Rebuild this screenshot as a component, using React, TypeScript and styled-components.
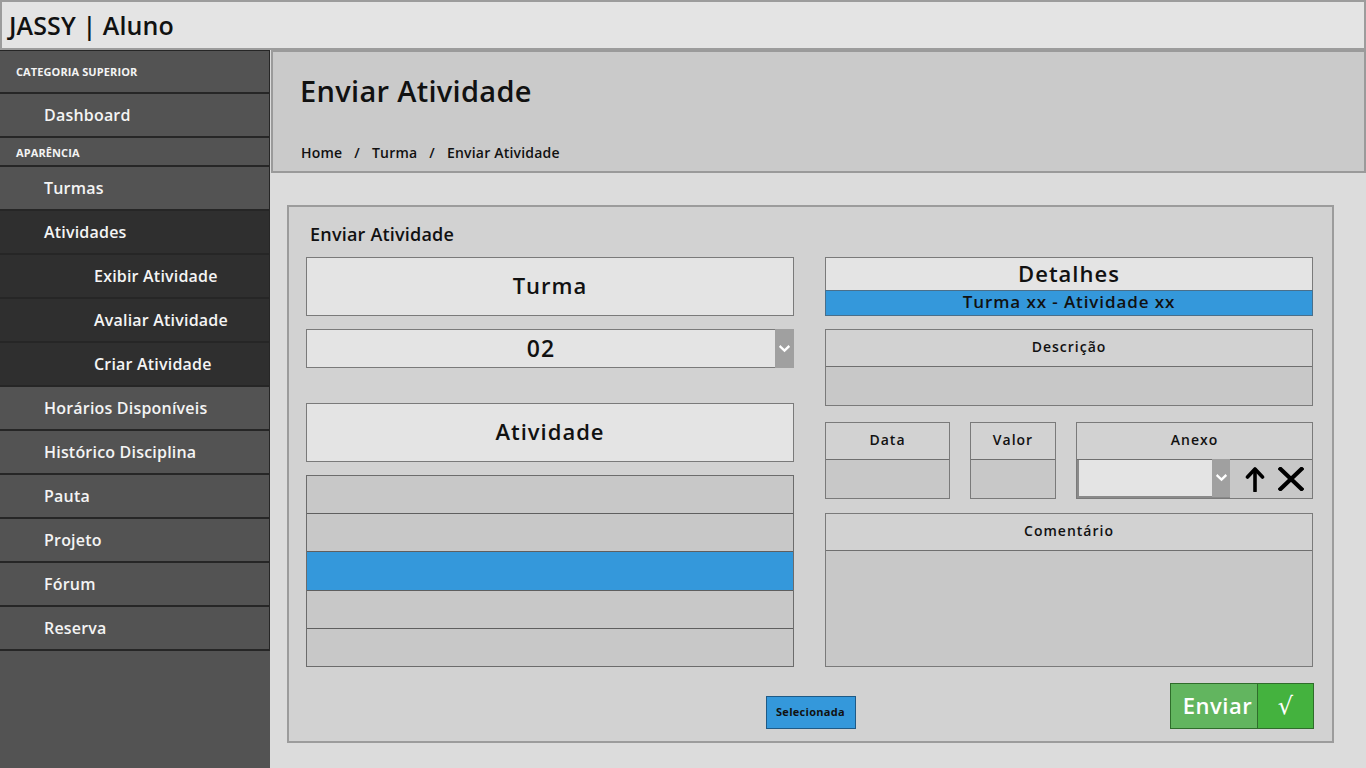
import React from 'react';
import styled, { createGlobalStyle } from 'styled-components';

const Global = createGlobalStyle`
  html, body { margin: 0; padding: 0; }
  body {
    font-family: "Open Sans", "Noto Sans", "DejaVu Sans", sans-serif;
    background: #dcdcdc;
    color: #111;
  }
  * { box-sizing: border-box; }
`;

const Page = styled.div`
  width: 1366px;
  height: 768px;
  display: flex;
  flex-direction: column;
  overflow: hidden;
`;

const TopBar = styled.header`
  height: 50px;
  flex: none;
  background: #e4e4e4;
  border: 2px solid #9c9c9c;
  display: flex;
  align-items: center;
  padding-left: 7px;
  padding-bottom: 1px;
  font-size: 25px;
  font-weight: 600;
  letter-spacing: 0.1px;
  color: #111;
`;

const Body = styled.div`
  flex: 1;
  display: flex;
  min-height: 0;
`;

const Sidebar = styled.nav`
  width: 270px;
  flex: none;
  background: #535353;
  display: flex;
  flex-direction: column;
  border-top: 1px solid #262626;
`;

const NavItem = styled.div<{ $level: number; $dark?: boolean; $header?: boolean }>`
  height: ${(p) => (p.$header ? (p.$level === 0 ? 43 : 29) : 44)}px;
  flex: none;
  background: ${(p) => (p.$dark ? '#2f2f2f' : '#535353')};
  border-bottom: 2px solid #262626;
  border-right: 1px solid #262626;
  display: flex;
  align-items: center;
  padding-left: ${(p) => (p.$header ? 16 : p.$level === 2 ? 94 : 44)}px;
  padding-top: ${(p) => (p.$header && p.$level === 1 ? 2 : 0)}px;
  color: #f4f4f4;
  font-size: ${(p) => (p.$header ? 11 : 16)}px;
  font-weight: ${(p) => (p.$header ? 700 : 600)};
  letter-spacing: ${(p) => (p.$header ? '0.1px' : '0.2px')};
`;

const Main = styled.main`
  flex: 1;
  display: flex;
  flex-direction: column;
  min-width: 0;
  background: #dcdcdc;
`;

const HeaderPanel = styled.section`
  height: 123px;
  flex: none;
  margin-left: 1px;
  background: #cacaca;
  border: 2px solid #9a9a9a;
  padding: 21px 27px 0;
  display: flex;
  flex-direction: column;
`;

const PageTitle = styled.h1`
  margin: 0;
  height: 36px;
  line-height: 36px;
  font-size: 29px;
  font-weight: 600;
  letter-spacing: 0.3px;
  color: #111;
`;

const Breadcrumb = styled.div`
  margin-top: 34px;
  height: 20px;
  line-height: 20px;
  font-size: 14px;
  font-weight: 600;
  letter-spacing: 0.2px;
  display: flex;
  gap: 12px;
  padding-left: 1px;
`;

const Card = styled.section`
  margin: 32px 32px 25px 17px;
  flex: 1;
  background: #d2d2d2;
  border: 2px solid #9c9c9c;
  padding: 15px 19px 12px 17px;
  display: flex;
  flex-direction: column;
`;

const CardTitle = styled.h2`
  margin: 0 0 11px 4px;
  height: 24px;
  line-height: 24px;
  font-size: 18px;
  font-weight: 600;
  letter-spacing: 0.2px;
`;

const Columns = styled.div`
  display: grid;
  grid-template-columns: 488px 488px;
  column-gap: 31px;
  height: 410px;
`;

const Column = styled.div`
  display: flex;
  flex-direction: column;
`;

const LabelBox = styled.div<{ $mt?: number }>`
  height: 59px;
  margin-top: ${(p) => p.$mt ?? 0}px;
  background: #e4e4e4;
  border: 1px solid #7a7a7a;
  display: flex;
  align-items: center;
  justify-content: center;
  padding-bottom: 4px;
  font-size: 22px;
  font-weight: 600;
  letter-spacing: 1px;
`;

const SelectBox = styled.div<{ $mt?: number }>`
  height: 39px;
  margin-top: ${(p) => p.$mt ?? 0}px;
  display: flex;
  background: #e4e4e4;
  border: 1px solid #7a7a7a;
  border-right: none;
`;

const SelectValue = styled.div`
  flex: 1;
  display: flex;
  align-items: center;
  justify-content: center;
  padding-bottom: 2px;
  font-size: 23px;
  font-weight: 600;
  letter-spacing: 1px;
`;

const SelectArrow = styled.div<{ $w: number }>`
  width: ${(p) => p.$w}px;
  flex: none;
  background: #a0a0a0;
  display: flex;
  align-items: center;
  justify-content: center;
  margin: -1px 0;
`;

const List = styled.div<{ $mt?: number }>`
  margin-top: ${(p) => p.$mt ?? 0}px;
  height: 192px;
  border: 1px solid #6c6c6c;
  display: flex;
  flex-direction: column;
`;

const ListRow = styled.div<{ $selected?: boolean }>`
  flex: 1;
  background: ${(p) => (p.$selected ? '#3498db' : '#c8c8c8')};
  & + & { border-top: 1px solid #5f5f5f; }
`;

const Details = styled.div`
  display: flex;
  flex-direction: column;
  height: 59px;
`;

const DetailsHead = styled.div`
  height: 33px;
  background: #e4e4e4;
  border: 1px solid #7a7a7a;
  border-bottom: none;
  display: flex;
  align-items: center;
  justify-content: center;
  padding-bottom: 3px;
  font-size: 22px;
  font-weight: 600;
  letter-spacing: 1px;
`;

const DetailsStrip = styled.div`
  height: 26px;
  background: #3498db;
  border: 1px solid #4a6f8a;
  display: flex;
  align-items: center;
  justify-content: center;
  padding-bottom: 3px;
  font-size: 17px;
  font-weight: 600;
  letter-spacing: 0.9px;
`;

const Field = styled.div<{ $mt?: number; $bodyH: number }>`
  margin-top: ${(p) => p.$mt ?? 0}px;
  border: 1px solid #7a7a7a;
  display: grid;
  grid-template-rows: 37px ${(p) => p.$bodyH}px;
  background: #c8c8c8;
`;

const FieldHead = styled.div`
  background: #d2d2d2;
  border-bottom: 1px solid #6f6f6f;
  display: flex;
  align-items: center;
  justify-content: center;
  padding-bottom: 3px;
  font-size: 14px;
  font-weight: 600;
  letter-spacing: 1px;
`;

const FieldBody = styled.div`
  background: #c8c8c8;
  display: flex;
`;

const FieldRow = styled.div`
  margin-top: 16px;
  display: grid;
  grid-template-columns: 125px 86px 1fr;
  column-gap: 20px;
`;

const AttachSelect = styled.div`
  width: 153px;
  display: flex;
  background: #e4e4e4;
  border: 2px solid #8a8a8a;
  border-top: none;
  border-right: none;
`;

const AttachTools = styled.div`
  flex: 1;
  display: flex;
  align-items: center;
  justify-content: space-around;
  padding: 0 2px 0 8px;
`;

const Footer = styled.div`
  margin-top: 16px;
  height: 46px;
  display: grid;
  grid-template-columns: 1fr auto 1fr;
  align-items: end;
`;

const SelectedButton = styled.button`
  grid-column: 2;
  width: 90px;
  height: 33px;
  background: #3498db;
  border: 1px solid #1f5a86;
  font-family: inherit;
  font-size: 11px;
  font-weight: 700;
  letter-spacing: 0.3px;
  color: #111;
  padding: 0 0 2px;
  margin-left: 2px;
`;

const SendButton = styled.button`
  grid-column: 3;
  justify-self: end;
  width: 144px;
  height: 46px;
  display: flex;
  padding: 0;
  border: 1px solid #2f6d2b;
  background: #62b55f;
  font-family: inherit;
  color: #fff;
  margin-right: -1px;
`;

const SendLabel = styled.span`
  width: 86px;
  height: 100%;
  display: flex;
  align-items: center;
  justify-content: center;
  font-size: 22px;
  font-weight: 600;
  letter-spacing: 0.5px;
  padding: 0 0 3px 7px;
`;

const SendCheck = styled.span`
  flex: 1;
  height: 100%;
  background: #44b23e;
  border-left: 1px solid #2f6d2b;
  display: flex;
  align-items: center;
  justify-content: center;
  font-size: 24px;
  font-weight: 400;
  font-family: "DejaVu Sans", sans-serif;
`;

const Chevron = () => (
  <svg width="11" height="8" viewBox="0 0 11 8">
    <path d="M1.5 1.8 L5.5 5.6 L9.5 1.8" fill="none" stroke="#fff" strokeWidth="2.4" strokeLinecap="square" />
  </svg>
);

const UpArrow = () => (
  <svg width="20" height="26" viewBox="0 0 20 26">
    <path d="M10 25 V4" stroke="#000" strokeWidth="3.6" strokeLinecap="round" />
    <path d="M2.5 11 L10 3 L17.5 11" fill="none" stroke="#000" strokeWidth="3.6" strokeLinecap="round" strokeLinejoin="round" />
  </svg>
);

const CloseX = () => (
  <svg width="26" height="24" viewBox="0 0 26 24">
    <path d="M2.5 2 L23.5 22 M23.5 2 L2.5 22" stroke="#000" strokeWidth="4.2" strokeLinecap="square" />
  </svg>
);

const nav: { label: string; level: number; header?: boolean; dark?: boolean }[] = [
  { label: 'CATEGORIA SUPERIOR', level: 0, header: true },
  { label: 'Dashboard', level: 1 },
  { label: 'APARÊNCIA', level: 1, header: true },
  { label: 'Turmas', level: 1 },
  { label: 'Atividades', level: 1, dark: true },
  { label: 'Exibir Atividade', level: 2, dark: true },
  { label: 'Avaliar Atividade', level: 2, dark: true },
  { label: 'Criar Atividade', level: 2, dark: true },
  { label: 'Horários Disponíveis', level: 1 },
  { label: 'Histórico Disciplina', level: 1 },
  { label: 'Pauta', level: 1 },
  { label: 'Projeto', level: 1 },
  { label: 'Fórum', level: 1 },
  { label: 'Reserva', level: 1 },
];

export default function App() {
  return (
    <>
      <Global />
      <Page>
        <TopBar>JASSY | Aluno</TopBar>
        <Body>
          <Sidebar>
            {nav.map((n) => (
              <NavItem key={n.label} $level={n.level} $header={n.header} $dark={n.dark}>
                {n.label}
              </NavItem>
            ))}
          </Sidebar>
          <Main>
            <HeaderPanel>
              <PageTitle>Enviar Atividade</PageTitle>
              <Breadcrumb>
                <span>Home</span>
                <span>/</span>
                <span>Turma</span>
                <span>/</span>
                <span>Enviar Atividade</span>
              </Breadcrumb>
            </HeaderPanel>
            <Card>
              <CardTitle>Enviar Atividade</CardTitle>
              <Columns>
                <Column>
                  <LabelBox>Turma</LabelBox>
                  <SelectBox $mt={13}>
                    <SelectValue>02</SelectValue>
                    <SelectArrow $w={19}>
                      <Chevron />
                    </SelectArrow>
                  </SelectBox>
                  <LabelBox $mt={35}>Atividade</LabelBox>
                  <List $mt={13}>
                    <ListRow />
                    <ListRow />
                    <ListRow $selected />
                    <ListRow />
                    <ListRow />
                  </List>
                </Column>
                <Column>
                  <Details>
                    <DetailsHead>Detalhes</DetailsHead>
                    <DetailsStrip>Turma xx - Atividade xx</DetailsStrip>
                  </Details>
                  <Field $mt={13} $bodyH={38}>
                    <FieldHead>Descrição</FieldHead>
                    <FieldBody />
                  </Field>
                  <FieldRow>
                    <Field $bodyH={38}>
                      <FieldHead>Data</FieldHead>
                      <FieldBody />
                    </Field>
                    <Field $bodyH={38}>
                      <FieldHead>Valor</FieldHead>
                      <FieldBody />
                    </Field>
                    <Field $bodyH={38}>
                      <FieldHead>Anexo</FieldHead>
                      <FieldBody>
                        <AttachSelect>
                          <SelectValue />
                          <SelectArrow $w={18}>
                            <Chevron />
                          </SelectArrow>
                        </AttachSelect>
                        <AttachTools>
                          <UpArrow />
                          <CloseX />
                        </AttachTools>
                      </FieldBody>
                    </Field>
                  </FieldRow>
                  <Field $mt={14} $bodyH={115}>
                    <FieldHead>Comentário</FieldHead>
                    <FieldBody />
                  </Field>
                </Column>
              </Columns>
              <Footer>
                <SelectedButton>Selecionada</SelectedButton>
                <SendButton>
                  <SendLabel>Enviar</SendLabel>
                  <SendCheck>√</SendCheck>
                </SendButton>
              </Footer>
            </Card>
          </Main>
        </Body>
      </Page>
    </>
  );
}
